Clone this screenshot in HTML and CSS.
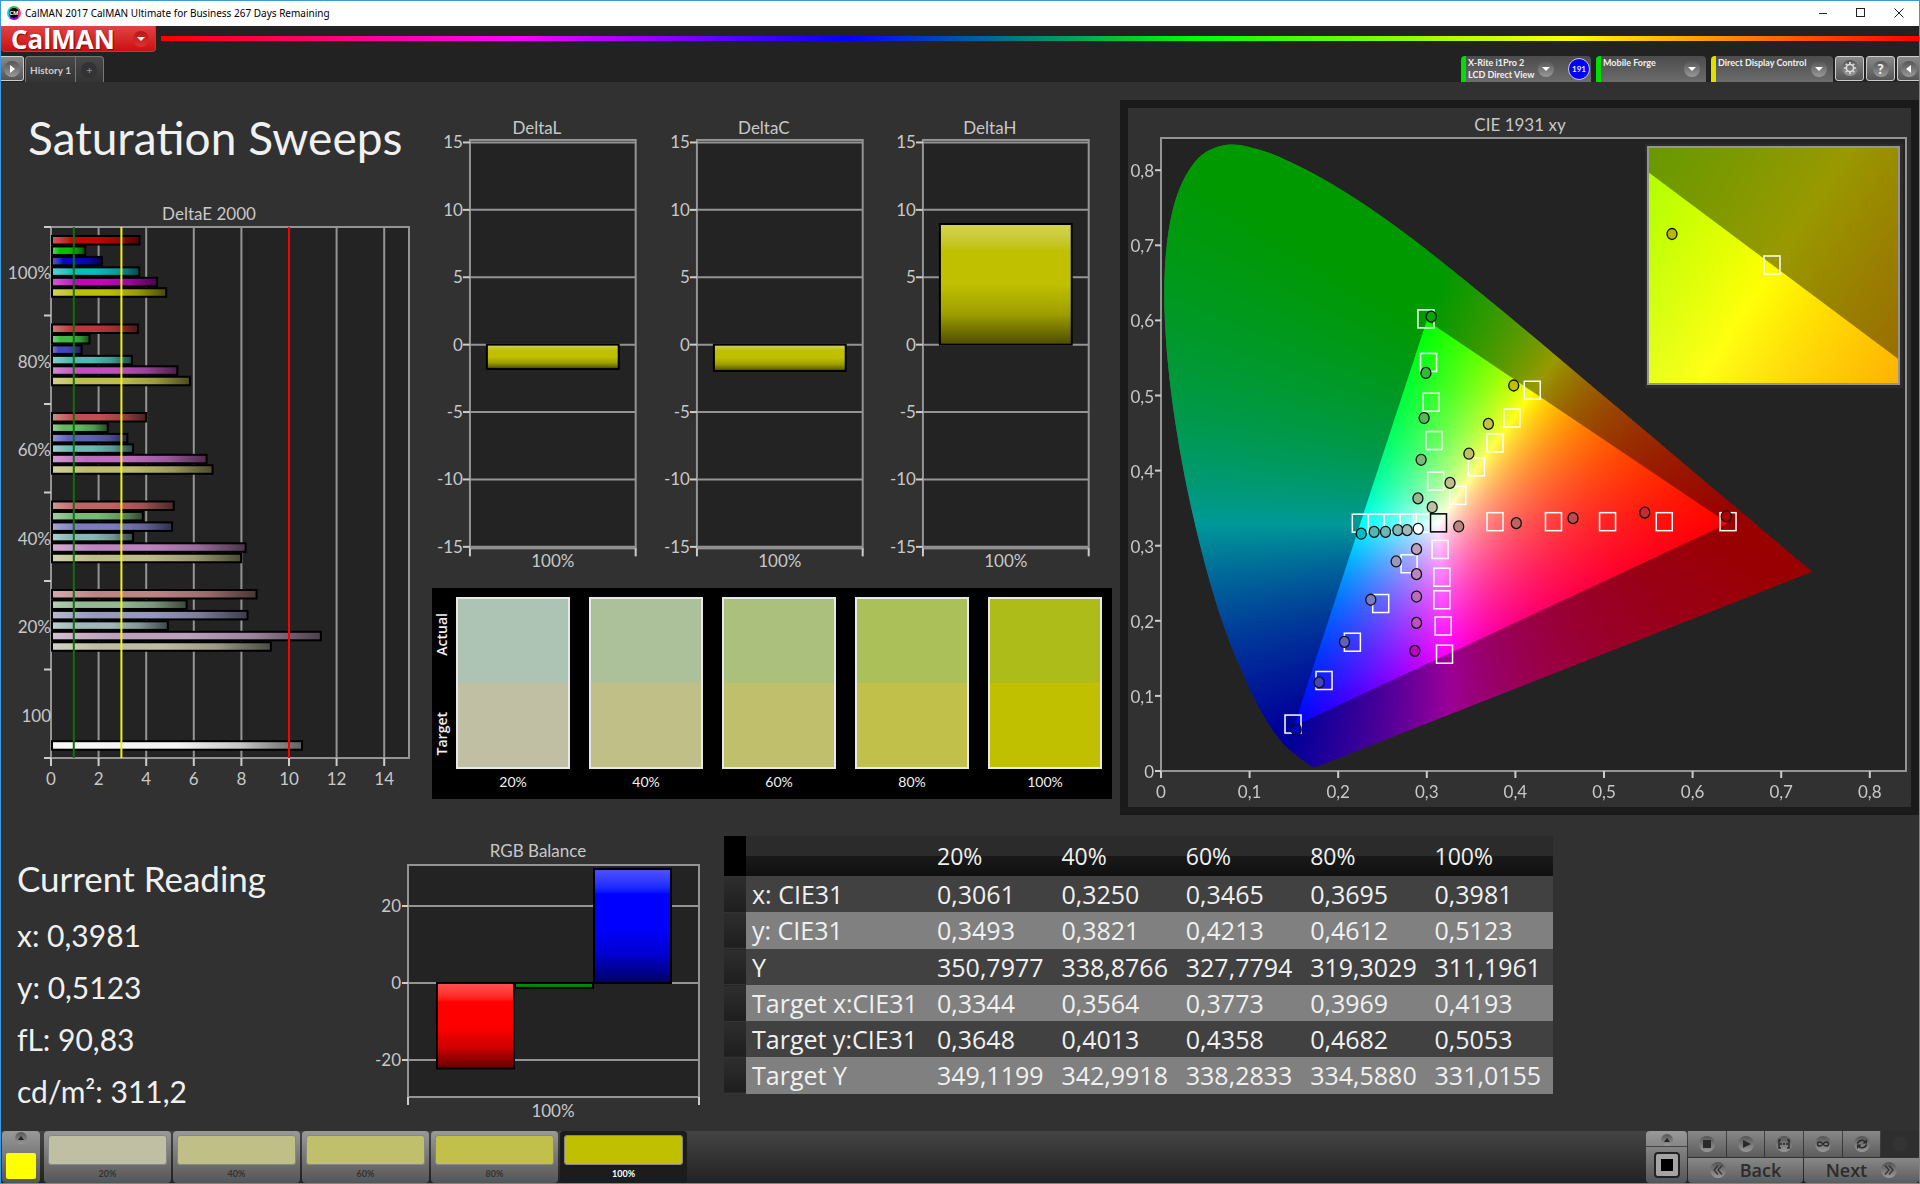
FILE: index.html
```html
<!DOCTYPE html>
<html lang="en">
<head>
    <meta charset="utf-8">
    <title>CalMAN 2017 CalMAN Ultimate for Business</title>
    <link rel="stylesheet" href="styles.css">
</head>
<body>
    <!-- Window title bar -->
    <header class="titlebar">
        <span class="app-icon">CM</span>
        <span class="app-title">CalMAN 2017 CalMAN Ultimate for Business 267 Days Remaining</span>
        <div class="window-buttons">
            <button type="button" aria-label="Minimize"><svg width="10" height="10" viewBox="0 0 10 10"><path d="M1 5.5h8" stroke="#222" fill="none"/></svg></button>
            <button type="button" aria-label="Maximize"><svg width="10" height="10" viewBox="0 0 10 10"><rect x=".5" y=".5" width="8" height="8" stroke="#222" fill="none"/></svg></button>
            <button type="button" aria-label="Close"><svg width="10" height="10" viewBox="0 0 10 10"><path d="M.5 .5l9 9M9.5 .5l-9 9" stroke="#222" fill="none"/></svg></button>
        </div>
    </header>

    <div class="brandbar">
        <button type="button" class="logo">CalMAN <span class="round round-red"><i class="arrow-down"></i></span></button>
        <div class="rainbow"></div>
    </div>

    <!-- Tabs and devices -->
    <nav class="tabbar">
        <button type="button" class="tool tool-left" aria-label="Show panel"><span class="round"><i class="arrow-right"></i></span></button>
        <div class="tabs">
            <button type="button" class="tab">History 1</button>
            <button type="button" class="tab tab-add" aria-label="Add history"><span class="round round-dark">+</span></button>
        </div>
        <div class="devices">
            <div class="device device-meter">
                <button type="button" class="device-name">X-Rite i1Pro 2<br>LCD Direct View</button>
                <span class="round"><i class="arrow-down"></i></span>
                <span class="counter">191</span>
            </div>
            <div class="device device-source">
                <button type="button" class="device-name">Mobile Forge</button>
                <span class="round"><i class="arrow-down"></i></span>
            </div>
            <div class="device device-display">
                <button type="button" class="device-name">Direct Display Control</button>
                <span class="round"><i class="arrow-down"></i></span>
            </div>
            <div class="tools">
                <button type="button" class="tool" aria-label="Settings"><span class="round"><svg width="14" height="14" viewBox="0 0 14 14"><circle cx="7" cy="7" r="3.6" fill="none" stroke="#ddd" stroke-width="1.5"/><path d="M7 1v2M7 11v2M1 7h2M11 7h2M2.8 2.8l1.4 1.4M9.8 9.8l1.4 1.4M2.8 11.2l1.4-1.4M9.8 4.2l1.4-1.4" stroke="#ddd" stroke-width="1.7"/></svg></span></button>
                <button type="button" class="tool tool-help" aria-label="Help"><span class="round">?</span></button>
                <button type="button" class="tool tool-right" aria-label="Hide panel"><span class="round"><i class="arrow-left"></i></span></button>
            </div>
        </div>
    </nav>

    <main class="workspace">
        <section class="upper">
            <div class="sweeps">
                <h1>Saturation Sweeps</h1>
                <svg id="deltaE" class="chart" viewBox="0 0 423 600" role="img" aria-label="DeltaE 2000"></svg>
            </div>

            <div class="middle">
                <div class="deltas">
                    <svg id="deltaL" class="chart" viewBox="0 0 227 468" role="img" aria-label="DeltaL"></svg>
                    <svg id="deltaC" class="chart" viewBox="0 0 227 468" role="img" aria-label="DeltaC"></svg>
                    <svg id="deltaH" class="chart" viewBox="0 0 227 468" role="img" aria-label="DeltaH"></svg>
                </div>
                <div class="swatches">
                    <div class="swatch-sides"><span>Actual</span><span>Target</span></div>
                    <figure class="swatch s20"><div class="actual"></div><div class="target"></div><figcaption>20%</figcaption></figure>
                    <figure class="swatch s40"><div class="actual"></div><div class="target"></div><figcaption>40%</figcaption></figure>
                    <figure class="swatch s60"><div class="actual"></div><div class="target"></div><figcaption>60%</figcaption></figure>
                    <figure class="swatch s80"><div class="actual"></div><div class="target"></div><figcaption>80%</figcaption></figure>
                    <figure class="swatch s100"><div class="actual"></div><div class="target"></div><figcaption>100%</figcaption></figure>
                </div>
            </div>

            <div class="cie">
                <svg id="cie" class="chart" viewBox="0 0 783 699" role="img" aria-label="CIE 1931 xy"></svg>
            </div>
        </section>

        <section class="lower">
            <div class="reading">
                <h2>Current Reading</h2>
                <p>x: 0,3981</p>
                <p>y: 0,5123</p>
                <p>fL: 90,83</p>
                <p>cd/m²: 311,2</p>
            </div>

            <div class="balance">
                <svg id="rgb" class="chart" viewBox="0 0 348 290" role="img" aria-label="RGB Balance"></svg>
            </div>

            <table class="results">
                <thead>
                    <tr><th class="stub"></th><th class="label"></th><th>20%</th><th>40%</th><th>60%</th><th>80%</th><th>100%</th></tr>
                </thead>
                <tbody>
                    <tr><td class="stub"></td><th>x: CIE31</th><td>0,3061</td><td>0,3250</td><td>0,3465</td><td>0,3695</td><td>0,3981</td></tr>
                    <tr><td class="stub"></td><th>y: CIE31</th><td>0,3493</td><td>0,3821</td><td>0,4213</td><td>0,4612</td><td>0,5123</td></tr>
                    <tr><td class="stub"></td><th>Y</th><td>350,7977</td><td>338,8766</td><td>327,7794</td><td>319,3029</td><td>311,1961</td></tr>
                    <tr><td class="stub"></td><th>Target x:CIE31</th><td>0,3344</td><td>0,3564</td><td>0,3773</td><td>0,3969</td><td>0,4193</td></tr>
                    <tr><td class="stub"></td><th>Target y:CIE31</th><td>0,3648</td><td>0,4013</td><td>0,4358</td><td>0,4682</td><td>0,5053</td></tr>
                    <tr><td class="stub"></td><th>Target Y</th><td>349,1199</td><td>342,9918</td><td>338,2833</td><td>334,5880</td><td>331,0155</td></tr>
                </tbody>
            </table>
        </section>
    </main>

    <!-- Pattern list and playback -->
    <footer class="bottombar">
        <button type="button" class="current-color" aria-label="Current pattern"><span class="round round-small"><i class="arrow-up"></i></span><span class="color-box"></span></button>
        <div class="patterns">
            <button type="button" class="pattern s20"><span class="target"></span>20%</button>
            <button type="button" class="pattern s40"><span class="target"></span>40%</button>
            <button type="button" class="pattern s60"><span class="target"></span>60%</button>
            <button type="button" class="pattern s80"><span class="target"></span>80%</button>
            <button type="button" class="pattern s100 selected"><span class="target"></span>100%</button>
        </div>
        <div class="playback">
            <div class="window-size">
                <button type="button" class="size-up" aria-label="More"><span class="round round-small"><i class="arrow-up"></i></span></button>
                <button type="button" class="size-icon" aria-label="Pattern window"><svg width="28" height="28" viewBox="0 0 28 28"><rect x="2" y="2" width="24" height="24" rx="3" fill="#a4a4a4" stroke="#222" stroke-width="2"/><rect x="8" y="8" width="12" height="12" fill="#000"/></svg></button>
            </div>
            <div class="controls">
                <div class="control-row">
                    <button type="button" aria-label="Stop"><span class="round"><svg width="16" height="16" viewBox="0 0 16 16"><rect x="4" y="4" width="8" height="8" fill="#2a2a2a"/></svg></span></button>
                    <button type="button" aria-label="Play"><span class="round"><svg width="16" height="16" viewBox="0 0 16 16"><path d="M5 4l8 4-8 4z" fill="#2a2a2a"/></svg></span></button>
                    <button type="button" aria-label="Range"><span class="round"><svg width="16" height="16" viewBox="0 0 16 16"><path d="M5 4H3v8h2M11 4h2v8h-2" fill="none" stroke="#2a2a2a" stroke-width="1.5"/><path d="M4 8h2M7 8h2M10 8h2" stroke="#2a2a2a" stroke-width="1.5"/></svg></span></button>
                    <button type="button" aria-label="Loop"><span class="round"><svg width="16" height="16" viewBox="0 0 16 16"><path d="M8 8C6.500 5.500 2.500 5 2.500 8s4 2.500 5.500 0 5.500-3 5.500 0-4 2.500-5.500 0z" fill="none" stroke="#2a2a2a" stroke-width="1.4"/></svg></span></button>
                    <button type="button" aria-label="Refresh"><span class="round"><svg width="16" height="16" viewBox="0 0 16 16"><path d="M3.500 7.500C4 4.500 8.500 3 11 5.500M12.500 8.500C12 11.500 7.500 13 5 10.500" fill="none" stroke="#2a2a2a" stroke-width="1.6"/><path d="M13 3v4.500H8.500zM3 13V8.500h4.500z" fill="#2a2a2a"/></svg></span></button>
                    <button type="button" class="idle" aria-label="Idle" disabled><span class="round round-dark"></span></button>
                </div>
                <div class="control-row nav-row">
                    <button type="button"><span class="round"><svg width="12" height="12" viewBox="0 0 12 12"><path d="M6 1.500L2 6l4 4.500M10 1.500L6 6l4 4.500" fill="none" stroke="#333" stroke-width="1.3"/></svg></span>Back</button>
                    <button type="button">Next<span class="round"><svg width="12" height="12" viewBox="0 0 12 12"><path d="M2 1.500L6 6l-4 4.500M6 1.500L10 6l-4 4.500" fill="none" stroke="#333" stroke-width="1.3"/></svg></span></button>
                </div>
            </div>
        </div>
    </footer>

    <script src="script.js"></script>
</body>
</html>
```
FILE: styles.css
```css
* {
    box-sizing: border-box;
}

body {
    margin: 0;
    min-height: 100vh;
    display: flex;
    flex-direction: column;
    border: 1px solid #3a9ade;
    background-color: #313131;
    color: #f0f0f0;
    font-family: Lato, "Open Sans", sans-serif;
}

button {
    margin: 0;
    padding: 0;
    border: none;
    background: none;
    color: inherit;
    font-family: inherit;
    cursor: pointer;
}

h1, h2, p, figure {
    margin: 0;
    font-weight: normal;
}

/* Title bar */
.titlebar {
    height: 25px;
    padding: 0 1px 2px 6px;
    display: flex;
    align-items: center;
    gap: 4px;
    background: #fff;
    color: #000;
    font-family: "Noto Sans", "Open Sans", sans-serif;
    font-size: 10px;
}

.app-icon {
    width: 14px;
    height: 14px;
    border: 2px solid #0af;
    border-color: #2c3 #f3a #80f #1cf;
    border-radius: 50%;
    background: #000;
    color: #fff;
    font-size: 6px;
    font-weight: bold;
    line-height: 10px;
    text-align: center;
}

.window-buttons {
    margin-left: auto;
    display: flex;
}

.window-buttons button {
    width: 38px;
    height: 23px;
}

.window-buttons svg {
    display: block;
    margin: auto;
}

/* Logo and colour line */
.brandbar {
    height: 28px;
    display: flex;
    background: #222;
}

.logo {
    width: 155px;
    height: 26px;
    padding: 0 6px 0 10px;
    display: flex;
    align-items: center;
    justify-content: space-between;
    border: 1px solid #8a5050;
    border-width: 0 1px 1px 0;
    border-radius: 0 0 4px 4px;
    background: linear-gradient(#e04444, #cc1010);
    color: #fff;
    font-family: "Open Sans", "Noto Sans", sans-serif;
    font-size: 26px;
    font-weight: bold;
    line-height: 24px;
    text-shadow: 1px 1px 1px #800;
}

.rainbow {
    flex: 1;
    height: 5px;
    margin: 10px 0 0 5px;
    background: linear-gradient(to right, #f00, #f0f 20%, #00f 39%, #0f0 59%, #ff0 80%, #f00);
}

/* Round button faces */
.round {
    width: 16px;
    height: 16px;
    flex: none;
    display: inline-flex;
    align-items: center;
    justify-content: center;
    border-radius: 50%;
    background: linear-gradient(#555, #999);
}

.round-red {
    background: linear-gradient(#b81818, #e03030);
}

.round-dark {
    background: #333;
    color: #888;
}

.round-small {
    width: 12px;
    height: 12px;
}

.arrow-down, .arrow-up {
    border: 4px solid transparent;
    border-bottom-width: 0;
    border-top-color: #fff;
}

.arrow-up {
    border-width: 0 3px 4px;
    border-bottom-color: #222;
}

.arrow-right, .arrow-left {
    border: 4px solid transparent;
    border-right-width: 0;
    border-left: 5px solid #fff;
}

.arrow-left {
    transform: rotate(180deg);
}

/* Tabs */
.tabbar {
    height: 28px;
    padding-top: 2px;
    display: flex;
    align-items: flex-start;
    background: #222;
}

.tool {
    width: 29px;
    height: 25px;
    border: 1px solid #ccc;
    border-radius: 3px;
    background: linear-gradient(#8a8a8a, #555);
}

.tool-left {
    width: 23px;
    border-left: none;
    border-radius: 0 3px 3px 0;
}

.tool-right {
    width: 22px;
    border-right: none;
    border-radius: 3px 0 0 3px;
}

.tool-help {
    font-size: 14px;
    font-weight: 900;
}

.tabs {
    height: 26px;
    margin-left: 1px;
    display: flex;
    border: 1px solid #777;
    border-bottom: none;
    border-radius: 4px 4px 0 0;
    background: linear-gradient(#484848, #333);
}

.tab {
    padding: 0 4px;
    border-right: 1px solid #777;
    color: #ccc;
    font-size: 10px;
    font-weight: bold;
}

.tab-add {
    width: 27px;
    border-right: none;
}

.devices {
    height: 26px;
    margin-left: auto;
    display: flex;
    gap: 5px;
}

.device {
    height: 26px;
    padding-right: 6px;
    display: flex;
    align-items: center;
    border-left: 5px solid #0d0;
    border-radius: 4px 4px 0 0;
    background: linear-gradient(#4c4c4c, #6c6c6c);
}

.device-name {
    align-self: flex-start;
    flex: 1;
    padding: 1px 0 0 2px;
    font-size: 9px;
    font-weight: bold;
    line-height: 12px;
    text-align: left;
    white-space: nowrap;
}

.device-meter {
    width: 130px;
    padding-right: 1px;
}

.device-source {
    width: 110px;
}

.device-display {
    width: 122px;
    border-left-color: #e0e000;
}

.counter {
    width: 22px;
    height: 22px;
    margin-left: 14px;
    border: 1px solid #ccc;
    border-radius: 50%;
    background: #00f;
    font-size: 8px;
    font-weight: bold;
    line-height: 20px;
    text-align: center;
}

.tools {
    display: flex;
    gap: 2px;
    margin-left: -3px;
}

/* Workspace */
.workspace {
    flex: 1;
}

.upper {
    padding-top: 18px;
    display: grid;
    grid-template-columns: 423fr 696fr 799fr;
    align-items: start;
}

.chart {
    display: block;
    width: 100%;
    fill: #c8c8c8;
    font-size: 17px;
}

.sweeps h1 {
    margin: 10px 0 34px 27px;
    font-size: 46px;
    line-height: 56px;
}

.deltas {
    margin: 13px 16px 0 0;
    display: grid;
    grid-template-columns: repeat(3, 1fr);
}

.swatches {
    margin: 8px 8px 0;
    padding: 9px 10px 4px 0;
    display: grid;
    grid-template-columns: 24px repeat(4, 133fr) 114fr;
    background: #000;
}

.swatch-sides {
    height: 172px;
    padding: 16px 5px 14px 0;
    display: flex;
    flex-direction: column;
    justify-content: space-between;
    align-items: center;
    font-family: "Open Sans", "Noto Sans", sans-serif;
    font-size: 14px;
    font-weight: 600;
    line-height: 18px;
}

.swatch-sides span {
    writing-mode: vertical-rl;
    transform: rotate(180deg);
}

.swatch {
    padding-right: 19px;
    font-size: 14px;
    text-align: center;
}

.swatch:last-child {
    padding-right: 0;
}

.swatch div {
    height: 86px;
    border: 2px solid #e8e8e8;
}

.swatch .actual {
    border-bottom: none;
}

.swatch .target {
    border-top: none;
}

.swatch figcaption {
    line-height: 26px;
}

.s20 .actual { background: #adc4b5; }
.s40 .actual { background: #acc19a; }
.s60 .actual { background: #acc07d; }
.s80 .actual { background: #acc05a; }
.s100 .actual { background: #adbc19; }
.s20 .target { background: #c0bfa4; }
.s40 .target { background: #c0bf87; }
.s60 .target { background: #c0bf6b; }
.s80 .target { background: #c0c04b; }
.s100 .target { background: #c0c000; }

.cie {
    border: 8px solid #1a1a1a;
}

.lower {
    padding-top: 21px;
    display: grid;
    grid-template-columns: 375fr 348fr 829fr 366fr;
    align-items: start;
}

.reading {
    padding: 19px 0 0 16px;
    font-size: 30px;
    line-height: 52px;
}

.reading h2 {
    margin-bottom: 8px;
    font-size: 35px;
    line-height: 46px;
}

/* Results table */
.results {
    width: 100%;
    height: 258px;
    table-layout: fixed;
    border-collapse: collapse;
    font-family: "Open Sans", "Noto Sans", sans-serif;
    font-size: 25px;
    line-height: 36px;
}

.results th, .results td {
    padding: 0 0 0 6px;
    font-weight: normal;
    text-align: left;
    white-space: nowrap;
}

.results thead th {
    height: 40px;
    background: linear-gradient(#2b2b2b 50%, #191919 50%, #101010);
    font-size: 23px;
}

.results .label {
    width: 185px;
}

.results .stub {
    width: 22px;
    padding: 0;
}

.results thead .stub {
    background: #000;
}

.results tbody tr {
    background: #414141;
}

.results tbody tr:nth-child(even) {
    background: #808080;
}

.results tbody .stub {
    border-bottom: 1px solid #333;
    background: linear-gradient(#2e2e2e, #1e1e1e);
}

/* Bottom bar */
.bottombar {
    height: 52px;
    display: flex;
    gap: 4px;
    padding-left: 1px;
    background: linear-gradient(#444, #222);
}

.current-color {
    width: 38px;
    padding: 1px 0 4px;
    display: flex;
    flex-direction: column;
    align-items: center;
    justify-content: space-between;
    border-radius: 4px;
    background: linear-gradient(#999, #555);
}

.color-box {
    width: 30px;
    height: 26px;
    border-radius: 2px;
    background: #ff0;
}

.patterns {
    display: flex;
    gap: 2px;
}

.pattern {
    width: 127px;
    padding: 4px 4px 0;
    display: flex;
    flex-direction: column;
    align-items: center;
    border-radius: 4px;
    background: linear-gradient(#999, #555);
    color: #333;
    font-size: 9px;
    font-weight: bold;
    line-height: 18px;
}

.pattern .target {
    width: 100%;
    height: 31px;
    border: 1px solid #888;
    border-radius: 3px;
}

.pattern.selected {
    background: #1c1c1c;
    color: #fff;
}

.playback {
    margin-left: auto;
    display: flex;
    gap: 1px;
}

.window-size {
    width: 41px;
    display: flex;
    flex-direction: column;
    border-radius: 4px;
    background: linear-gradient(#999, #555);
}

.size-up {
    height: 16px;
    border-bottom: 1px solid #444;
    line-height: 12px;
}

.size-icon {
    flex: 1;
}

.size-icon svg {
    display: block;
    margin: auto;
}

.controls {
    width: 231px;
    display: flex;
    flex-direction: column;
    gap: 1px;
}

.control-row {
    flex: 1;
    display: flex;
    gap: 1px;
}

.control-row button {
    flex: 1;
    display: flex;
    align-items: center;
    justify-content: center;
    background: linear-gradient(#888, #5c5c5c);
}

.control-row .idle {
    background: #2e2e2e;
}

.nav-row button {
    gap: 14px;
    border-radius: 0 0 4px 4px;
    color: #2c2c2c;
    font-family: "Open Sans", "Noto Sans", sans-serif;
    font-size: 18px;
    font-weight: 600;
    line-height: 24px;
}
```
FILE: script.js
```js
const LINE = '#949494';
const PLOT = '#232323';

function line(x1, y1, x2, y2, color, width) {
    return `<line x1="${x1}" y1="${y1}" x2="${x2}" y2="${y2}" stroke="${color || LINE}" stroke-width="${width || 2}"/>`;
}

function text(x, y, value, anchor) {
    return `<text x="${x}" y="${y}" text-anchor="${anchor || 'middle'}">${value}</text>`;
}

// Shiny bar: light at the start, dark at the end
function gradient(id, color, vertical) {
    const end = vertical ? 'x2="0" y2="1"' : 'x2="1" y2="0"';
    return `<linearGradient id="${id}" x1="0" y1="0" ${end}>
        <stop offset="0" stop-color="color-mix(in srgb, ${color} 68%, white)"/>
        <stop offset=".22" stop-color="${color}"/>
        <stop offset=".5" stop-color="${color}"/>
        <stop offset=".75" stop-color="color-mix(in srgb, ${color} 82%, black)"/>
        <stop offset="1" stop-color="color-mix(in srgb, ${color} 40%, black)"/>
    </linearGradient>`;
}

function bar(id, color, x, y, w, h, vertical) {
    return gradient(id, color, vertical) +
        `<rect x="${x}" y="${y}" width="${w}" height="${h}" fill="url(#${id})" stroke="#000" stroke-width="2"/>`;
}

// ---- DeltaE 2000 ----
const deltaE = [
    ['100%', [3.76, 1.48, 2.18, 3.75, 4.5, 4.88], ['#bd0808', '#08bd08', '#0808bd', '#08bdbd', '#bd08bd', '#bdbd08']],
    ['80%', [3.7, 1.66, 1.33, 3.44, 5.35, 5.88], ['#bd3838', '#42b842', '#4444bd', '#50b8b4', '#bd50bd', '#bdbd4c']],
    ['60%', [4.04, 2.43, 3.25, 3.49, 6.58, 6.83], ['#bd5050', '#60b860', '#6060bd', '#6cb8b4', '#bd6cbd', '#bdbd6c']],
    ['40%', [5.2, 3.9, 5.13, 3.49, 8.22, 8.03], ['#bd6464', '#78b878', '#7c7cbd', '#88b8b4', '#bd84bd', '#bdbd88']],
    ['20%', [8.68, 5.74, 8.3, 4.95, 11.38, 9.28], ['#bd8484', '#94b894', '#9898bd', '#a0b8b8', '#bda0bd', '#bdbda4']],
    ['100', [0, 0, 0, 0, 0, 0, 10.59], ['', '', '', '', '', '', '#f4f4f4']]
];

function drawDeltaE() {
    const left = 50, top = 27, right = 408, bottom = 558, unit = 23.8, group = 88.5;
    let s = text(208, 20, 'DeltaE 2000');
    s += `<rect x="${left}" y="${top}" width="${right - left}" height="${bottom - top}" fill="${PLOT}" stroke="${LINE}" stroke-width="2"/>`;
    for (let v = 0; v < 15; v += 2) {
        const x = left + v * unit;
        s += line(x, top, x, bottom) + line(x, bottom, x, bottom + 8, '#ccc');
        s += text(x, 585, v);
    }
    for (let i = 0; i <= deltaE.length; i++) {
        s += line(left - 7, top + i * group, left, top + i * group, '#ccc');
    }
    deltaE.forEach(([label, values, colors], i) => {
        s += text(left, top + i * group + 52, label, 'end');
        values.forEach((v, j) => {
            if (v) {
                s += bar(`e${i}${j}`, colors[j], left + 1, top + i * group + 9 + j * 10.45, v * unit - 2, 8.5);
            }
        });
    });
    s += line(left + unit - 1, top, left + unit - 1, bottom, '#107010');
    s += line(left + 3 * unit - 1, top, left + 3 * unit - 1, bottom, '#f0f020');
    s += line(left + 10 * unit, top, left + 10 * unit, bottom, '#f00');
    document.getElementById('deltaE').innerHTML = s;
}

// ---- DeltaL, DeltaC, DeltaH ----
function drawDelta(id, title, value) {
    const left = 46, right = 212, top = 27, bottom = 436, zero = 232, unit = 13.5;
    let s = text(113, 21, title);
    s += `<rect x="${left}" y="${top}" width="${right - left}" height="${bottom - top}" fill="${PLOT}" stroke="${LINE}" stroke-width="2"/>`;
    for (let v = -15; v <= 15; v += 5) {
        const y = zero - v * unit;
        s += line(left, y, right, y) + line(left - 7, y, left, y, '#ccc');
        s += text(left - 7, y + 6, v, 'end');
    }
    s += line(left, bottom, left, bottom + 8, '#ccc') + line(right, bottom, right, bottom + 8, '#ccc');
    s += text(129, 455, '100%');
    const y = value > 0 ? zero - value * unit : zero;
    s += bar(id + 'g', '#c0c000', 63, y, 132, Math.abs(value) * unit, true);
    document.getElementById(id).innerHTML = s;
}

// ---- RGB Balance ----
function drawRGB() {
    const left = 32, right = 323, top = 29, bottom = 261, zero = 147, unit = 3.85;
    let s = text(162, 21, 'RGB Balance');
    s += `<rect x="${left}" y="${top}" width="${right - left}" height="${bottom - top}" fill="${PLOT}" stroke="${LINE}" stroke-width="2"/>`;
    for (const v of [20, 0, -20]) {
        const y = zero - v * unit;
        s += line(left, y, right, y) + line(left - 6, y, left, y, '#ccc');
        s += text(left - 7, y + 6, v, 'end');
    }
    s += line(left, bottom, left, bottom + 8, '#ccc') + line(right, bottom, right, bottom + 8, '#ccc');
    s += text(177, 281, '100%');
    s += bar('r', '#ff0000', 61, zero, 77, 22.2 * unit, true);
    s += bar('g', '#008c00', 139, zero, 78, 1.3 * unit, true);
    s += bar('b', '#0000ff', 218, zero - 29.6 * unit, 77, 29.6 * unit, true);
    document.getElementById('rgb').innerHTML = s;
}

// ---- CIE 1931 xy ----
const locus = [
    [.1741, .005], [.1733, .0048], [.1714, .0051], [.1689, .0069], [.1644, .0109], [.1566, .0177],
    [.144, .0297], [.1355, .0399], [.1241, .0578], [.1096, .0868], [.0913, .1327], [.0687, .2007],
    [.0454, .295], [.0235, .4127], [.0082, .5384], [.0039, .6548], [.0139, .7502], [.0389, .812],
    [.0743, .8338], [.1142, .8262], [.1547, .8059], [.1929, .7816], [.2296, .7543], [.2658, .7243],
    [.3016, .6923], [.3731, .6245], [.4441, .5547], [.5125, .4866], [.5752, .4242], [.627, .3725],
    [.6658, .334], [.6915, .3083], [.719, .2809], [.7347, .2653]
];
const gamut = [[.64, .33], [.3, .6], [.15, .06]];

const targets = [
    [.377, .332], [.443, .332], [.504, .332], [.568, .332], [.64, .332],
    [.299, .602], [.302, .544], [.305, .491], [.308, .44], [.31, .386],
    [.419, .507], [.396, .47], [.377, .437], [.356, .405], [.335, .367],
    [.225, .33], [.243, .33], [.261, .33], [.279, .33], [.294, .33],
    [.315, .295], [.317, .258], [.317, .228], [.3185, .193], [.32, .1555],
    [.28, .276], [.248, .223], [.216, .1715], [.184, .1205], [.149, .0625]
];

const readings = [
    [.336, .3256, '#b98484'], [.401, .33, '#bc6464'], [.465, .3367, '#bc4c4c'], [.546, .344, '#bc3030'], [.638, .339, '#b00000'],
    [.29, .363, '#94b894'], [.2936, .4144, '#78b878'], [.297, .47, '#58b858'], [.299, .53, '#38b838'], [.305, .605, '#00a800'],
    [.3061, .3513, '#c0bfa4'], [.3262, .3836, '#c0bf87'], [.3475, .4225, '#c0bf6b'], [.3695, .4622, '#c0c04b'], [.3981, .5133, '#c0c000'],
    [.226, .316, '#00bfbf'], [.2406, .3185, '#50b8b4'], [.2534, .3185, '#6cb8b4'], [.2673, .3207, '#88b8b4'], [.2778, .3207, '#a0b8b8'],
    [.2903, .3225, '#ffffff'],
    [.2884, .2954, '#bda0bd'], [.2884, .2621, '#bd84bd'], [.2884, .2323, '#bd6cbd'], [.2884, .1972, '#bd50bd'], [.2865, .16, '#bd00bd'],
    [.2654, .279, '#9898bd'], [.2368, .228, '#7c7cbd'], [.2071, .172, '#6060bd'], [.1785, .118, '#4444bd'], [.1526, .055, '#0000bd']
];

// Paints the colours of the range x0..x1, y0..y1 on a canvas
function paintColors(canvas, x0, x1, y0, y1) {
    const w = canvas.width, h = canvas.height;
    const px = x => (x - x0) / (x1 - x0) * w;
    const py = y => (y1 - y) / (y1 - y0) * h;
    const off = document.createElement('canvas');
    off.width = w;
    off.height = h;
    const offCtx = off.getContext('2d');
    const img = offCtx.createImageData(w, h);
    for (let j = 0; j < h; j++) {
        for (let i = 0; i < w; i++) {
            const x = x0 + (i + .5) / w * (x1 - x0);
            const y = y1 - (j + .5) / h * (y1 - y0);
            const z = 1 - x - y;
            const r = Math.max(0, 3.2406 * x - 1.5372 * y - .4986 * z);
            const g = Math.max(0, -.9689 * x + 1.8758 * y + .0415 * z);
            const b = Math.max(0, .0557 * x - .204 * y + 1.057 * z);
            const m = Math.max(r, g, b);
            img.data.set([r / m * 255, g / m * 255, b / m * 255, 255], (j * w + i) * 4);
        }
    }
    offCtx.putImageData(img, 0, 0);

    // smooth curve through the locus points
    const shape = new Path2D();
    shape.moveTo(px(locus[0][0]), py(locus[0][1]));
    for (let i = 0; i < locus.length - 1; i++) {
        const a = locus[Math.max(0, i - 1)], b = locus[i], c = locus[i + 1];
        const d = locus[Math.min(locus.length - 1, i + 2)];
        shape.bezierCurveTo(
            px(b[0] + (c[0] - a[0]) / 6), py(b[1] + (c[1] - a[1]) / 6),
            px(c[0] - (d[0] - b[0]) / 6), py(c[1] - (d[1] - b[1]) / 6),
            px(c[0]), py(c[1]));
    }
    shape.closePath();

    const ctx = canvas.getContext('2d');
    ctx.clip(shape);
    ctx.drawImage(off, 0, 0);
    // everything outside the gamut triangle is dimmed
    const outside = new Path2D();
    outside.rect(-9999, -9999, 29999, 29999);
    gamut.forEach(([x, y], i) => i ? outside.lineTo(px(x), py(y)) : outside.moveTo(px(x), py(y)));
    outside.closePath();
    ctx.fillStyle = 'rgba(0, 0, 0, .4)';
    ctx.fill(outside, 'evenodd');
}

function square(x, y, color) {
    return `<rect x="${x - 8}" y="${y - 9}" width="16" height="18" fill="none" stroke="${color}" stroke-width="1.5"/>`;
}

function dot(x, y, color) {
    return `<ellipse cx="${x}" cy="${y}" rx="5" ry="5.5" fill="${color}" stroke="#111" stroke-width="1.3"/>`;
}

function drawCIE() {
    const left = 33, top = 30, w = 745, h = 633, bottom = top + h;
    const ux = 886, uy = 751;
    const px = x => left + x * ux, py = y => bottom - y * uy;
    let s = text(392, 23, 'CIE 1931 xy');
    s += `<rect x="${left}" y="${top}" width="${w}" height="${h}" fill="${PLOT}"/>`;
    s += `<foreignObject x="${left}" y="${top}" width="${w}" height="${h}"><canvas id="cieColors" width="${w}" height="${h}"></canvas></foreignObject>`;
    s += `<rect x="${left}" y="${top}" width="${w}" height="${h}" fill="none" stroke="${LINE}" stroke-width="2"/>`;
    for (let i = 0; i <= 8; i++) {
        const label = i ? '0,' + i : '0';
        s += line(px(i / 10), bottom, px(i / 10), bottom + 7, '#ccc') + text(px(i / 10), bottom + 27, label);
        s += line(left - 6, py(i / 10), left, py(i / 10), '#ccc') + text(left - 7, py(i / 10) + 7, label, 'end');
    }
    targets.forEach(([x, y]) => s += square(px(x), py(y), '#fff'));
    s += square(px(.3132), py(.3304), '#000');
    readings.forEach(([x, y, c]) => s += dot(px(x), py(y), c));

    // magnified view of the current target
    s += `<rect x="517" y="36" width="258" height="244" fill="#2c2c2c"/>`;
    s += `<foreignObject x="520" y="39" width="251" height="237"><canvas id="zoomColors" width="251" height="237"></canvas></foreignObject>`;
    s += `<rect x="520" y="39" width="251" height="237" fill="none" stroke="${LINE}" stroke-width="2"/>`;
    s += dot(544, 126, '#b8b800') + square(644, 157, '#fff');
    document.getElementById('cie').innerHTML = s;

    paintColors(document.getElementById('cieColors'), 0, w / ux, 0, h / uy);
    paintColors(document.getElementById('zoomColors'), .3928, .4458, .4787, .5319);
}

drawDeltaE();
drawDelta('deltaL', 'DeltaL', -1.8);
drawDelta('deltaC', 'DeltaC', -1.95);
drawDelta('deltaH', 'DeltaH', 8.95);
drawRGB();
drawCIE();
```
